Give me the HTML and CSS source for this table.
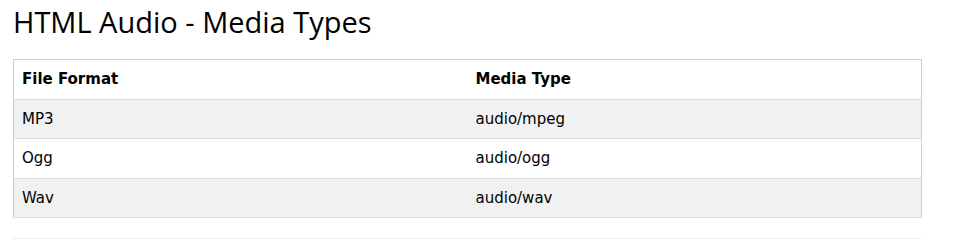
FILE: index.html
```html
<!DOCTYPE html>
<html>
<head>
<meta charset="utf-8">
<link rel="stylesheet" href="styles.css">
</head>
<body>
<div class="main">
  <h2 class="title">HTML Audio - Media Types</h2>
  <table class="types">
    <tr class="head"><th class="col1">File Format</th><th>Media Type</th></tr>
    <tr class="odd"><td>MP3</td><td>audio/mpeg</td></tr>
    <tr class="even"><td>Ogg</td><td>audio/ogg</td></tr>
    <tr class="odd"><td>Wav</td><td>audio/wav</td></tr>
  </table>
  <hr class="rule">
</div>
</body>
</html>
```
FILE: styles.css
```css
html, body {
  margin: 0;
  padding: 0;
  background: #fff;
}
.main {
  padding: 2px 36px 0 13px;
  color: #000;
}
.title {
  margin: 0 0 17px 0;
  font-family: "Open Sans", "Noto Sans", sans-serif;
  font-weight: 400;
  font-size: 29px;
  line-height: 40px;
  color: #000;
}
.types {
  width: 100%;
  border-collapse: collapse;
  border: 1px solid #ccc;
  font-family: "DejaVu Sans", Verdana, sans-serif;
  font-size: 15px;
  line-height: 22.5px;
}
.types tr {
  border-bottom: 1px solid #ddd;
}
.types th, .types td {
  text-align: left;
  padding: 8px;
  vertical-align: top;
}
.types th {
  font-weight: 700;
}
.col1 {
  width: 50%;
}
.head, .even {
  background: #fff;
}
.odd {
  background: #f1f1f1;
}
.rule {
  margin: 20px 0 0 0;
  border: 0;
  border-top: 1px solid #eee;
  height: 0;
}
```
